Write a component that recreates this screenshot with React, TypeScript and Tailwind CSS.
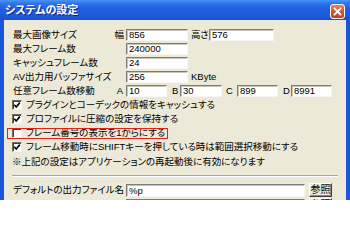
import React from 'react';

const base = "[font-family:'Liberation_Sans','Noto_Sans_CJK_JP',sans-serif] [font-feature-settings:'palt']";

function Box({ w, text }: { w: string; text?: string }) {
  return (
    <div
      className={`${w} h-[12px] shrink-0 bg-white border border-t-[#7c7b76] border-l-[#7c7b76] border-b-[#f7f6f2] border-r-[#f7f6f2] shadow-[inset_1px_1px_0_#c9c6b8] pl-[2px] text-[9.5px] leading-[10px] text-black overflow-hidden whitespace-nowrap`}
    >
      {text}
    </div>
  );
}

function Check({ checked }: { checked: boolean }) {
  return (
    <div className="w-[10px] h-[10px] shrink-0 bg-white border border-t-[#6f6e68] border-l-[#6f6e68] border-b-[#f4f3ee] border-r-[#f4f3ee] shadow-[inset_1px_1px_0_#3e3e3e] flex items-center justify-center">
      {checked && (
        <svg width="8" height="8" viewBox="0 0 8 8">
          <polyline points="1.2,3.8 3.2,6 6.8,1.6" fill="none" stroke="#000" strokeWidth="1.7" />
        </svg>
      )}
    </div>
  );
}

function Button({ label }: { label: string }) {
  return (
    <div className="ml-[4px] w-[23px] h-[14px] shrink-0 bg-[#ece9d8] border border-t-white border-l-white border-b-[#404040] border-r-[#404040] shadow-[inset_-1px_-1px_0_#8a887f] flex items-center justify-center text-[10px] leading-none text-black">
      {label}
    </div>
  );
}

export default function App() {
  return (
    <div className={`${base} relative w-[350px] h-[200px] overflow-hidden flex flex-col bg-[#1c56d8] text-black`}>
      {/* title bar */}
      <div className="h-[20px] shrink-0 flex items-start justify-between bg-[linear-gradient(180deg,#4b97fb_0%,#2d72ea_18%,#215fdf_45%,#1e59da_80%,#1a50cf_100%)]">
        <div className="pl-[5px] pt-[3px] text-white font-bold text-[11px] leading-[14px] [text-shadow:1px_1px_0_#0a2a8a]">
          システムの設定
        </div>
        <div className="mt-[4px] mr-[5px] w-[15px] h-[15px] rounded-[3px] border border-white bg-[linear-gradient(180deg,#e9805f_0%,#d9522f_50%,#c8401e_100%)] flex items-center justify-center">
          <svg width="9" height="9" viewBox="0 0 9 9">
            <path d="M1.5 1.5 L7.5 7.5 M7.5 1.5 L1.5 7.5" stroke="#fff" strokeWidth="1.8" strokeLinecap="square" />
          </svg>
        </div>
      </div>

      {/* body */}
      <div className="flex-1 mx-[4px] bg-[#ece9d8] pl-[9px] pt-[8px] text-[9.5px] leading-none">
        <div className="h-[14px] flex items-center">
          <div className="w-[100px] shrink-0 whitespace-nowrap">最大画像サイズ</div>
          <div className="w-[13px] shrink-0 text-right pr-[2px]">幅</div>
          <Box w="w-[62px]" text="856" />
          <div className="ml-[3px] w-[18px] shrink-0 whitespace-nowrap tracking-[-0.5px]">高さ</div>
          <Box w="w-[65px]" text="576" />
        </div>
        <div className="h-[14px] flex items-center">
          <div className="w-[113px] shrink-0 whitespace-nowrap">最大フレーム数</div>
          <Box w="w-[62px]" text="240000" />
        </div>
        <div className="h-[14px] flex items-center">
          <div className="w-[113px] shrink-0 whitespace-nowrap">キャッシュフレーム数</div>
          <Box w="w-[62px]" text="24" />
        </div>
        <div className="h-[14px] flex items-center">
          <div className="w-[113px] shrink-0 whitespace-nowrap">AV出力用バッファサイズ</div>
          <Box w="w-[62px]" text="256" />
          <div className="ml-[3px] whitespace-nowrap text-[9.5px] [font-family:'Liberation_Sans',sans-serif]">KByte</div>
        </div>
        <div className="h-[14px] flex items-center">
          <div className="w-[100px] shrink-0 whitespace-nowrap">任意フレーム数移動</div>
          <div className="w-[13px] shrink-0 text-right pr-[3px]">A</div>
          <Box w="w-[41px]" text="10" />
          <div className="ml-[5px] w-[8px] shrink-0">B</div>
          <Box w="w-[42px]" text="30" />
          <div className="ml-[4px] w-[11px] shrink-0">C</div>
          <Box w="w-[41px]" text="899" />
          <div className="ml-[5px] w-[8px] shrink-0">D</div>
          <Box w="w-[41px]" text="8991" />
        </div>

        {/* checkboxes */}
        <div className="h-[14px] flex items-center -ml-[1px] gap-[4px]">
          <Check checked />
          <div className="whitespace-nowrap">プラグインとコーデックの情報をキャッシュする</div>
        </div>
        <div className="h-[14px] flex items-center -ml-[1px] gap-[4px]">
          <Check checked />
          <div className="whitespace-nowrap">プロファイルに圧縮の設定を保持する</div>
        </div>
        <div className="h-[14px] flex items-center -ml-[1px] gap-[4px]">
          <Check checked={false} />
          <div className="whitespace-nowrap">フレーム番号の表示を1からにする</div>
        </div>
        <div className="h-[14px] flex items-center -ml-[1px] gap-[4px]">
          <Check checked />
          <div className="whitespace-nowrap">フレーム移動時にSHIFTキーを押している時は範囲選択移動にする</div>
        </div>
        <div className="mt-[1px] h-[14px] flex items-center -ml-[1px] whitespace-nowrap">
          ※上記の設定はアプリケーションの再起動後に有効になります
        </div>

        {/* separator */}
        <div className="mt-[6px] -ml-[1px] w-[326px] border-t border-t-[#aca899] border-b border-b-white" />

        <div className="mt-[6px] h-[14px] flex items-center">
          <div className="w-[113px] shrink-0 whitespace-nowrap">デフォルトの出力ファイル名</div>
          <div className="w-[179px] h-[13px] shrink-0 bg-white border border-t-[#7c7b76] border-l-[#7c7b76] border-b-[#f7f6f2] border-r-[#f7f6f2] shadow-[inset_1px_1px_0_#c9c6b8] pl-[2px] text-[9.5px] leading-[11px]">
            %p
          </div>
          <Button label="参照" />
        </div>
        <div className="mt-[1px] h-[14px] flex items-center">
          <div className="w-[113px] shrink-0" />
          <div className="w-[179px] h-[13px] shrink-0 bg-white border border-t-[#7c7b76] border-l-[#7c7b76] border-b-[#f7f6f2] border-r-[#f7f6f2] shadow-[inset_1px_1px_0_#c9c6b8]" />
          <Button label="参照" />
        </div>
      </div>

      {/* red annotation box */}
      <div className="absolute left-[7px] top-[128px] w-[161px] h-[11px] border border-[#e3211c] pointer-events-none" />
    </div>
  );
}
